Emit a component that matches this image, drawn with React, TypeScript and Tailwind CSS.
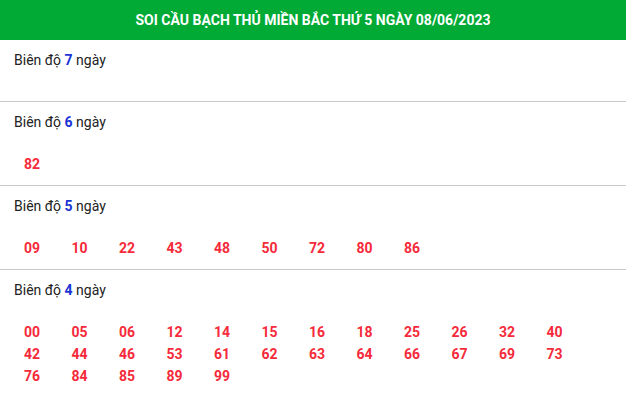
const sections: { days: number; numbers: string[] }[] = [
  { days: 7, numbers: [] },
  { days: 6, numbers: ["82"] },
  { days: 5, numbers: ["09", "10", "22", "43", "48", "50", "72", "80", "86"] },
  {
    days: 4,
    numbers: [
      "00", "05", "06", "12", "14", "15", "16", "18", "25", "26", "32", "40",
      "42", "44", "46", "53", "61", "62", "63", "64", "66", "67", "69", "73",
      "76", "84", "85", "89", "99"
    ]
  }
]

export default function App() {
  return (
    <div className="w-[626px] h-[396px] overflow-hidden bg-white font-['Roboto','Liberation_Sans',sans-serif]">
      <div className="h-10 bg-[#00aa35] flex items-center justify-center text-white text-[14px] font-bold uppercase">
        SOI CẦU BẠCH THỦ MIỀN BẮC THỨ 5 NGÀY 08/06/2023
      </div>

      {sections.map((s) => (
        <div
          key={s.days}
          className="px-[14px] pt-[10px] pb-[10px] border-b border-[#c8c8c8]">
          <div className="h-5 leading-5 text-[14px] text-[#222]">
            Biên độ <span className="font-bold text-[#1a33d4]">{s.days}</span> ngày
          </div>
          <div className="mt-[21px] flex flex-wrap">
            {s.numbers.map((n) => (
              <span
                key={n}
                className="w-[47.5px] pl-[10px] leading-[22px] text-[14px] font-bold text-[#f52a3a]">
                {n}
              </span>
            ))}
          </div>
        </div>
      ))}
    </div>
  )
}
